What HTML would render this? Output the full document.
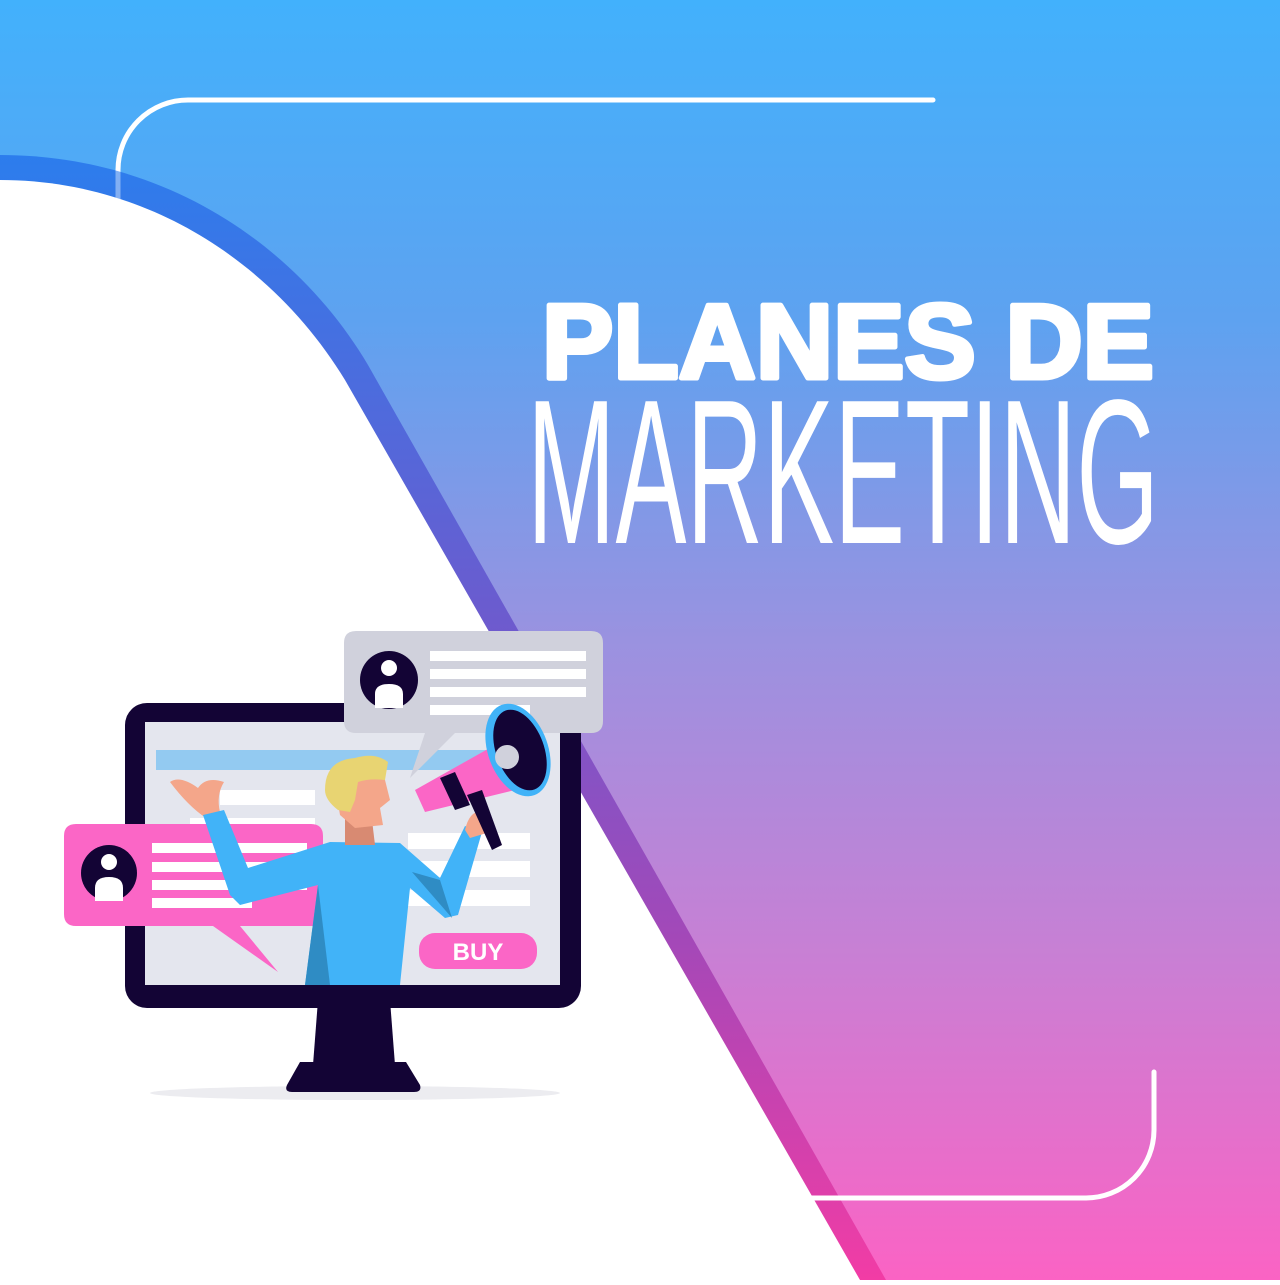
<!DOCTYPE html>
<html><head><meta charset="utf-8"><style>html,body{margin:0;padding:0}body{width:1280px;height:1280px;overflow:hidden}</style></head><body>
<svg width="1280" height="1280" viewBox="0 0 1280 1280" xmlns="http://www.w3.org/2000/svg">
<defs>
<linearGradient id="bg" x1="0" y1="0" x2="0" y2="1">
<stop offset="0" stop-color="#42b1fc"/><stop offset="0.25" stop-color="#5ea2f0"/><stop offset="0.5" stop-color="#9a92e0"/><stop offset="0.75" stop-color="#c97fd4"/><stop offset="1" stop-color="#fb63c4"/></linearGradient>
<linearGradient id="band" x1="0" y1="0" x2="0" y2="1">
<stop offset="0" stop-color="#2c7ded"/><stop offset="0.4" stop-color="#6a5ccf"/><stop offset="0.7" stop-color="#a448b8"/><stop offset="1" stop-color="#f23ca5"/></linearGradient>
</defs>
<rect width="1280" height="1280" fill="url(#bg)"/>
<path d="M118,200 V170 A70,70 0 0 1 188,100 H933" fill="none" stroke="#fff" stroke-width="5" stroke-linecap="round"/>
<path d="M0,155 C170,155 300,250 368,365 L886,1280 L0,1280Z" fill="url(#band)"/>
<path d="M118,170 V200" stroke="#fff" stroke-opacity="0.4" stroke-width="5"/>
<path d="M0,180 C150,180 275,265 345,380 L860,1280 L0,1280Z" fill="#fff"/>
<path d="M1154,1072 V1130 A68,68 0 0 1 1086,1198 H810" fill="none" stroke="#fff" stroke-width="5" stroke-linecap="round"/>
<text x="542" y="378" font-family="Liberation Sans, sans-serif" font-weight="bold" font-size="106" fill="#fff" stroke="#fff" stroke-width="5" stroke-linejoin="round" textLength="612" lengthAdjust="spacingAndGlyphs">PLANES DE</text>
<text x="527" y="543" font-family="Liberation Sans Narrow, Liberation Sans, sans-serif" font-size="206" fill="#fff" textLength="632" lengthAdjust="spacingAndGlyphs">MARKETING</text>
<!-- illustration -->
<ellipse cx="355" cy="1093" rx="205" ry="7" fill="#ececf0"/>
<path d="M318,1000 H390 L395,1065 H313Z" fill="#130435"/>
<path d="M300,1062 H406 L420,1085 Q422,1092 414,1092 H292 Q284,1092 287,1085Z" fill="#130435"/>
<rect x="125" y="703" width="456" height="305" rx="22" fill="#130435"/>
<rect x="145" y="722" width="415" height="263" fill="#e4e6ee"/>
<rect x="156" y="750" width="390" height="20" fill="#93caf1"/>
<g fill="#fff"><rect x="220" y="790" width="95" height="15"/><rect x="190" y="818" width="125" height="15"/><rect x="408" y="833" width="122" height="16"/><rect x="408" y="861" width="122" height="16"/><rect x="408" y="890" width="122" height="16"/></g>
<!-- grey bubble -->
<path d="M356,631 H591 Q603,631 603,643 V721 Q603,733 591,733 H455 L410,778 L425,733 H356 Q344,733 344,721 V643 Q344,631 356,631Z" fill="#d0d1dc"/>
<circle cx="389" cy="680" r="29" fill="#130435"/><circle cx="389" cy="668" r="8" fill="#fff"/><path d="M375,708 V694 Q375,684 389,684 Q403,684 403,694 V708Z" fill="#fff"/>
<g fill="#fff"><rect x="430" y="651" width="156" height="10"/><rect x="430" y="669" width="156" height="10"/><rect x="430" y="687" width="156" height="10"/><rect x="430" y="705" width="100" height="10"/></g>
<!-- pink bubble -->
<path d="M76,824 H311 Q323,824 323,836 V914 Q323,926 311,926 H240 L278,972 L213,926 H76 Q64,926 64,914 V836 Q64,824 76,824Z" fill="#fb66c6"/>
<circle cx="109" cy="873" r="28" fill="#130435"/><circle cx="109" cy="862" r="8" fill="#fff"/><path d="M95,901 V888 Q95,877 109,877 Q123,877 123,888 V901Z" fill="#fff"/>
<g fill="#fff"><rect x="152" y="843" width="155" height="10"/><rect x="152" y="862" width="155" height="10"/><rect x="152" y="880" width="155" height="10"/><rect x="152" y="898" width="100" height="10"/></g>
<!-- buy -->
<rect x="419" y="933" width="118" height="36" rx="16" fill="#fb66c6"/>
<text x="478" y="960" text-anchor="middle" font-family="Liberation Sans, sans-serif" font-weight="bold" font-size="24" fill="#fff">BUY</text>
<!-- person -->
<path d="M170,782 Q180,775 198,788 Q206,776 224,782 Q216,795 220,812 L206,818 Q188,806 170,782Z" fill="#f4a68a"/>
<path d="M203,815 L224,810 L248,868 L330,842 L400,843 L440,878 L465,826 L482,832 L458,915 L445,918 L410,888 L400,985 H305 L318,885 L240,905 L230,895 Z" fill="#41b3f8"/>
<path d="M305,985 L318,885 L330,985Z" fill="#2f8cc4"/>
<path d="M412,872 L440,880 L452,918Z" fill="#2f8cc4"/>
<path d="M345,815 L372,820 L375,845 L345,845Z" fill="#d88a72"/>
<path d="M333,775 Q360,760 385,780 L390,800 L380,808 L383,825 L355,828 L340,815 Z" fill="#f4a68a"/>
<path d="M325,790 Q325,760 355,758 Q375,752 388,762 L385,780 Q370,778 358,782 L355,800 L350,812 L338,810 Q325,800 325,790Z" fill="#e8d472"/>
<path d="M465,830 Q470,808 485,812 Q497,818 490,832 L470,838Z" fill="#f4a68a"/>
<!-- megaphone -->
<path d="M415,790 L495,745 L515,790 L425,812Z" fill="#fb66c6"/>
<path d="M440,778 L455,772 L470,805 L455,810Z" fill="#130435"/>
<path d="M467,795 L482,790 L502,845 L492,850Z" fill="#130435"/>
<ellipse cx="518" cy="750" rx="30" ry="48" transform="rotate(-20 518 750)" fill="#41b3f8"/>
<ellipse cx="520" cy="750" rx="24" ry="42" transform="rotate(-20 520 750)" fill="#130435"/>
<circle cx="507" cy="757" r="12" fill="#d0d1dc"/>
</svg>
</body></html>
